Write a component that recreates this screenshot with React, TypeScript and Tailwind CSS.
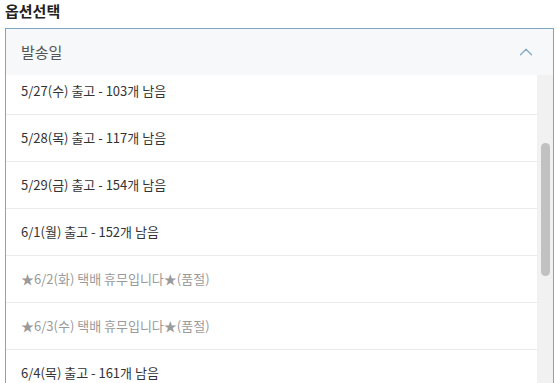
import { ChevronUp } from 'lucide-react';

const options = [
    { label: '5/27(수) 출고 - 103개 남음', soldOut: false },
    { label: '5/28(목) 출고 - 117개 남음', soldOut: false },
    { label: '5/29(금) 출고 - 154개 남음', soldOut: false },
    { label: '6/1(월) 출고 - 152개 남음', soldOut: false },
    { label: '★6/2(화) 택배 휴무입니다★(품절)', soldOut: true },
    { label: '★6/3(수) 택배 휴무입니다★(품절)', soldOut: true },
    { label: '6/4(목) 출고 - 161개 남음', soldOut: false },
];

export default function App() {
    return (
        <div
            className="w-[557px] h-[383px] overflow-hidden bg-white"
            style={{ fontFamily: '"Noto Sans CJK KR", "Noto Sans", sans-serif' }}
        >
            <div className="px-[5px] h-[28px] text-[15px] font-bold text-[#222] leading-[22px]">옵션선택</div>

            <div className="mx-[5px] w-[549px] border border-[#7ba6c4] h-[400px] flex flex-col">
                {/* 헤더 */}
                <div className="h-[46px] shrink-0 bg-[#f6f8fa] flex items-center justify-between pl-[15px] pr-[16px]">
                    <span className="text-[15px] text-[#555]">발송일</span>
                    <ChevronUp className="w-[22px] h-[22px] text-[#84a9c4]" strokeWidth={1.4} />
                </div>

                {/* 목록 + 스크롤바 */}
                <div className="flex flex-1 overflow-hidden">
                    <div className="flex-1 overflow-hidden">
                        <ul className="-mt-[7px]">
                            {options.map((opt) => (
                                <li
                                    key={opt.label}
                                    className={`h-[47px] border-b border-[#ebebeb] flex items-center pl-[15px] text-[13px] ${opt.soldOut ? 'text-[#9a9a9a]' : 'text-[#333]'}`}
                                >
                                    {opt.label}
                                </li>
                            ))}
                        </ul>
                    </div>
                    <div className="w-[16px] shrink-0 bg-[#f1f1f1] pt-[68px]">
                        <div className="mx-auto w-[9px] h-[133px] rounded-full bg-[#c1c1c1]" />
                    </div>
                </div>
            </div>
        </div>
    );
}
